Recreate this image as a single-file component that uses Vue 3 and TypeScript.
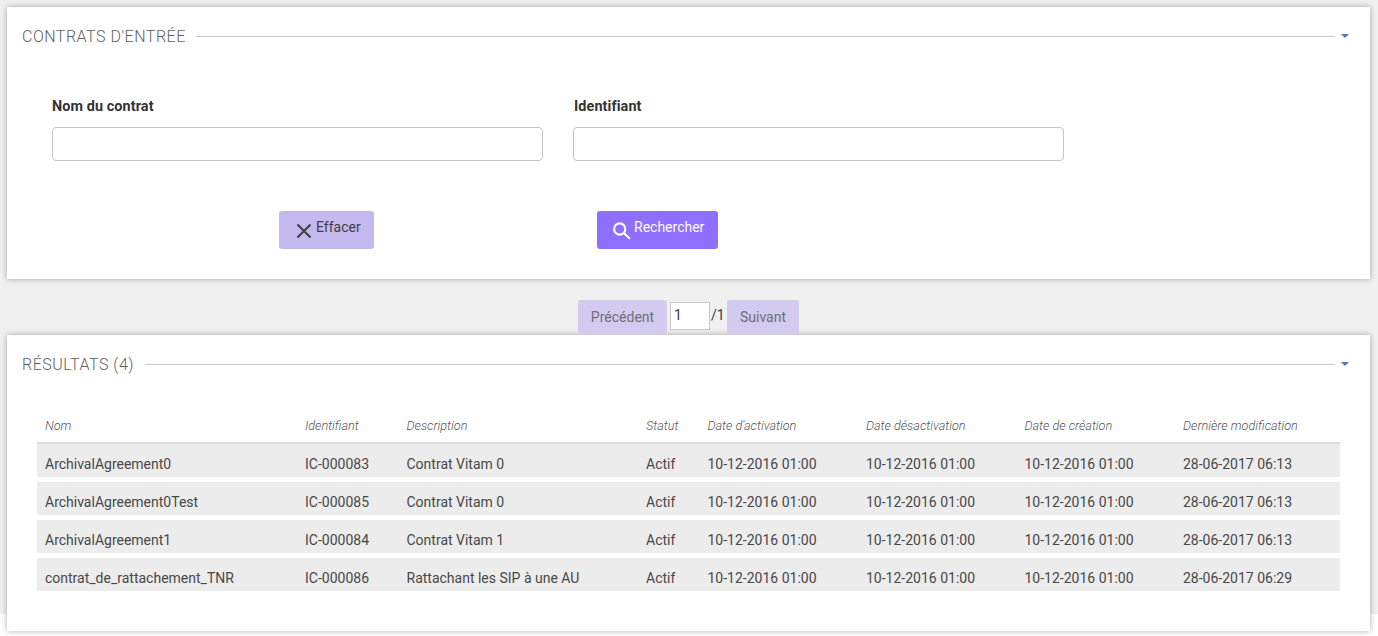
<script setup lang="ts">
import { ref } from 'vue'

interface Contract {
  name: string
  id: string
  description: string
  status: string
  activation: string
  deactivation: string
  created: string
  modified: string
}

const columns = [
  'Nom',
  'Identifiant',
  'Description',
  'Statut',
  "Date d'activation",
  'Date désactivation',
  'Date de création',
  'Dernière modification'
]

const contracts: Contract[] = [
  {
    name: 'ArchivalAgreement0',
    id: 'IC-000083',
    description: 'Contrat Vitam 0',
    status: 'Actif',
    activation: '10-12-2016 01:00',
    deactivation: '10-12-2016 01:00',
    created: '10-12-2016 01:00',
    modified: '28-06-2017 06:13'
  },
  {
    name: 'ArchivalAgreement0Test',
    id: 'IC-000085',
    description: 'Contrat Vitam 0',
    status: 'Actif',
    activation: '10-12-2016 01:00',
    deactivation: '10-12-2016 01:00',
    created: '10-12-2016 01:00',
    modified: '28-06-2017 06:13'
  },
  {
    name: 'ArchivalAgreement1',
    id: 'IC-000084',
    description: 'Contrat Vitam 1',
    status: 'Actif',
    activation: '10-12-2016 01:00',
    deactivation: '10-12-2016 01:00',
    created: '10-12-2016 01:00',
    modified: '28-06-2017 06:13'
  },
  {
    name: 'contrat_de_rattachement_TNR',
    id: 'IC-000086',
    description: 'Rattachant les SIP à une AU',
    status: 'Actif',
    activation: '10-12-2016 01:00',
    deactivation: '10-12-2016 01:00',
    created: '10-12-2016 01:00',
    modified: '28-06-2017 06:29'
  }
]

const contractName = ref('')
const contractId = ref('')
const page = ref('1')

const clear = () => {
  contractName.value = ''
  contractId.value = ''
}
</script>

<template>
  <div class="page">
    <section class="card search-card">
      <header class="card-title">
        <span>CONTRATS D'ENTRÉE</span>
        <i class="rule"></i>
        <i class="caret"></i>
      </header>

      <div class="fields">
        <label class="field">
          <span class="field-label">Nom du contrat</span>
          <input v-model="contractName" type="text" />
        </label>
        <label class="field">
          <span class="field-label id-label">Identifiant</span>
          <input v-model="contractId" type="text" />
        </label>
      </div>

      <div class="actions">
        <button class="btn btn-clear" type="button" @click="clear">
          <svg width="24" height="24" viewBox="0 0 24 24" fill="none" stroke="currentColor" stroke-width="2.1">
            <path d="M5.5 5.5l13 13M18.5 5.5l-13 13" />
          </svg>
          <span>Effacer</span>
        </button>
        <button class="btn btn-search" type="button">
          <svg width="24" height="24" viewBox="0 0 24 24" fill="none" stroke="currentColor" stroke-width="2.1">
            <circle cx="9.7" cy="10" r="5.6" />
            <path d="M13.8 14.1l6 5.6" />
          </svg>
          <span>Rechercher</span>
        </button>
      </div>
    </section>

    <nav class="pager">
      <button class="pager-btn" type="button">Précédent</button>
      <input v-model="page" class="pager-input" type="text" />
      <span class="pager-total">/1</span>
      <button class="pager-btn next" type="button">Suivant</button>
    </nav>

    <section class="card results-card">
      <header class="card-title">
        <span>RÉSULTATS (4)</span>
        <i class="rule"></i>
        <i class="caret"></i>
      </header>

      <div class="table">
        <div class="row head">
          <div v-for="col in columns" :key="col">{{ col }}</div>
        </div>
        <div v-for="item in contracts" :key="item.id" class="row body">
          <div>{{ item.name }}</div>
          <div>{{ item.id }}</div>
          <div>{{ item.description }}</div>
          <div>{{ item.status }}</div>
          <div>{{ item.activation }}</div>
          <div>{{ item.deactivation }}</div>
          <div>{{ item.created }}</div>
          <div>{{ item.modified }}</div>
        </div>
      </div>
    </section>
  </div>
</template>

<style scoped>
.page {
  box-sizing: border-box;
  height: 636px;
  padding-top: 7px;
  overflow: hidden;
  background: linear-gradient(#f0f0f0 614px, #fff 614px);
  font-family: Roboto, "Liberation Sans", sans-serif;
  color: #3c3c3c;
}

.card {
  width: 1363px;
  margin-left: 7px;
  box-sizing: border-box;
  background: #fff;
  box-shadow: 0 0 6px rgba(0, 0, 0, 0.32);
}

.search-card {
  height: 272px;
}

.results-card {
  height: 296px;
}

.card-title {
  display: flex;
  align-items: center;
  height: 20px;
  padding: 19px 21px 0 15px;
  font-size: 16px;
  font-weight: 300;
  letter-spacing: 0.5px;
  color: #5f5f5f;
}

.rule {
  flex: 1;
  height: 1px;
  margin: 0 6px 0 10px;
  background: #c8c8c8;
}

.caret {
  width: 0;
  height: 0;
  border-left: 4.5px solid transparent;
  border-right: 4.5px solid transparent;
  border-top: 4.5px solid #3b7fc4;
}

.fields {
  display: flex;
  gap: 30px;
  padding: 51px 0 0 45px;
}

.field {
  display: flex;
  flex-direction: column;
  width: 491px;
}

.field-label {
  height: 20px;
  margin-bottom: 10px;
  font-size: 14.4px;
  letter-spacing: 0.1px;
  line-height: 20px;
  font-weight: 700;
  color: #333;
}

.id-label {
  padding-left: 1px;
}

.field input {
  box-sizing: border-box;
  height: 34px;
  padding: 0 10px;
  border: 1px solid #c4c4c4;
  border-radius: 4px;
  background: #fff;
  outline: none;
}

.actions {
  display: flex;
  margin-top: 50px;
  padding-left: 272px;
}

.btn {
  display: flex;
  align-items: flex-start;
  box-sizing: border-box;
  height: 38px;
  border: 0;
  border-radius: 3px;
  font-family: inherit;
  font-size: 14px;
  cursor: pointer;
}

.btn svg {
  margin-top: 8px;
  flex: none;
}

.btn span {
  line-height: 16px;
  margin-top: 8px;
}

.btn-clear {
  width: 95px;
  padding: 0 0 0 13px;
  background: #c3b9ef;
  color: #3f3f46;
}

.btn-search {
  width: 121px;
  margin-left: 223px;
  padding: 0 0 0 13px;
  background: #8e6fff;
  color: #fff;
}

.pager {
  position: relative;
  z-index: 1;
  display: flex;
  align-items: flex-start;
  height: 34px;
  margin-top: 21px;
  margin-bottom: 1px;
  padding-left: 578px;
}

.pager-btn {
  box-sizing: border-box;
  width: 89px;
  height: 34px;
  padding: 0;
  border: 0;
  border-radius: 3px;
  background: #d2caef;
  font-family: inherit;
  font-size: 14px;
  color: #6f6f78;
}

.pager-btn.next {
  width: 72px;
}

.pager-input {
  box-sizing: border-box;
  width: 40px;
  height: 28px;
  margin: 2px 0 0 3px;
  padding: 0 3px 2px;
  border: 1px solid #c8c8c8;
  background: #fff;
  font-family: inherit;
  font-size: 14px;
  color: #3c3c3c;
  outline: none;
}

.pager-total {
  box-sizing: border-box;
  width: 17px;
  padding-left: 1px;
  line-height: 31px;
  font-size: 14px;
}

.results-card .rule {
  margin-left: 11px;
}

.table {
  margin: 38px 30px 0;
  font-size: 14px;
}

.row {
  display: grid;
  grid-template-columns: 268px 101.5px 239.5px 61.5px 158.5px 158.5px 158.5px 1fr;
}

.row > div {
  white-space: nowrap;
}

.row > div:first-child {
  padding-left: 8px;
}

.head {
  box-sizing: border-box;
  height: 32px;
  padding-top: 6px;
  border-bottom: 2px solid #dcdcdc;
  font-size: 12.65px;
  font-style: italic;
  font-weight: 300;
  line-height: 16px;
  color: #555;
}

.body {
  height: 33px;
  margin-bottom: 5px;
  background: #ececec;
  line-height: 40px;
  color: #484848;
}
</style>
